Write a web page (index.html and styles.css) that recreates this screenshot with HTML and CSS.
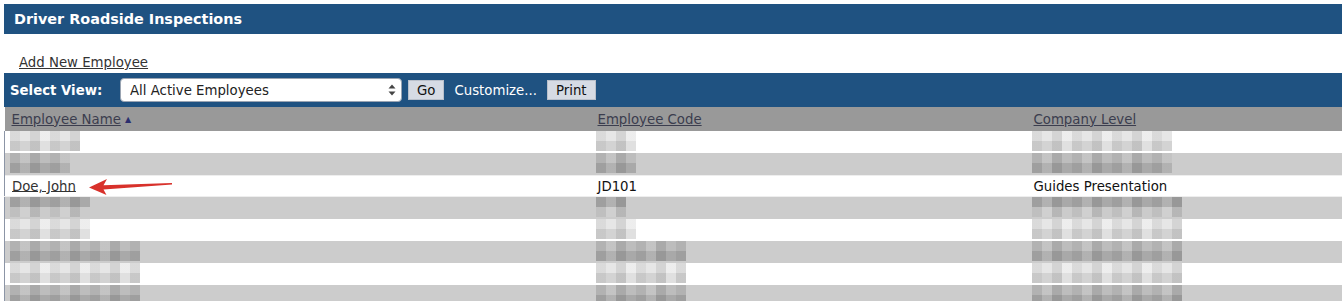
FILE: index.html
```html
<!DOCTYPE html>
<html>
  <head>
    <title>Driver Roadside Inspections</title>
    <link rel="stylesheet" href="styles.css">
  </head>
  <body>
    <div class="page_title">Driver Roadside Inspections</div>

    <div class="add_line">
      <a href="#" class="plain_link">Add New Employee</a>
    </div>

    <div class="view_bar">
      <span class="view_label">Select View:</span>
      <div class="select_box">
        <select class="view_select">
          <option>All Active Employees</option>
        </select>
        <svg class="select_arrows" width="8" height="12" viewBox="0 0 8 12">
          <path d="M4 0.5 L7.5 4.5 H0.5 Z M4 11.5 L7.5 7.5 H0.5 Z" fill="#444"/>
        </svg>
      </div>
      <button class="bar_button">Go</button>
      <span class="bar_text">Customize...</span>
      <button class="bar_button">Print</button>
    </div>

    <table class="emp_table">
      <thead>
        <tr>
          <th class="col_name"><a href="#" class="plain_link">Employee Name</a> <span class="sort_mark">&#9650;</span></th>
          <th class="col_code"><a href="#" class="plain_link">Employee Code</a></th>
          <th class="col_level"><a href="#" class="plain_link">Company Level</a></th>
        </tr>
      </thead>
      <tbody>
        <tr class="row_white">
          <td class="col_name"><span class="blur light w7"></span></td>
          <td class="col_code"><span class="blur light w4"></span></td>
          <td class="col_level"><span class="blur light w14"></span></td>
        </tr>
        <tr class="row_grey">
          <td class="col_name"><span class="blur dark w6"></span></td>
          <td class="col_code"><span class="blur dark w4"></span></td>
          <td class="col_level"><span class="blur dark w14"></span></td>
        </tr>
        <tr class="row_white row_picked">
          <td class="col_name">
            <a href="#" class="plain_link">Doe, John</a>
            <svg class="pointer" width="84" height="17" viewBox="0 0 84 17">
              <path d="M0 9.5 L18 1 L14.5 7.2 L83 5 L83 6.4 L14.5 11.6 L17.5 17 Z" fill="#d8312b"/>
            </svg>
          </td>
          <td class="col_code">JD101</td>
          <td class="col_level">Guides Presentation</td>
        </tr>
        <tr class="row_grey">
          <td class="col_name"><span class="blur darktop w8"></span></td>
          <td class="col_code"><span class="blur darktop w3"></span></td>
          <td class="col_level"><span class="blur darktop w15"></span></td>
        </tr>
        <tr class="row_white">
          <td class="col_name"><span class="blur light w8"></span></td>
          <td class="col_code"><span class="blur light w4"></span></td>
          <td class="col_level"><span class="blur light w15"></span></td>
        </tr>
        <tr class="row_grey">
          <td class="col_name"><span class="blur dark w13"></span></td>
          <td class="col_code"><span class="blur dark w9"></span></td>
          <td class="col_level"><span class="blur dark w15"></span></td>
        </tr>
        <tr class="row_white">
          <td class="col_name"><span class="blur light w13"></span></td>
          <td class="col_code"><span class="blur light w9"></span></td>
          <td class="col_level"><span class="blur light w15"></span></td>
        </tr>
        <tr class="row_grey">
          <td class="col_name"><span class="blur dark w13"></span></td>
          <td class="col_code"><span class="blur dark w9"></span></td>
          <td class="col_level"><span class="blur dark w15"></span></td>
        </tr>
      </tbody>
    </table>
  </body>
</html>
```

FILE: styles.css
```css
/* employee list page */
body {
  margin: 4px 0 0 4px;
  font-family: "DejaVu Sans", Verdana, sans-serif;
  font-size: 13.3px;
  color: #111;
  background: #fff;
}

.page_title {
  background-color: #1f5281;
  color: #fff;
  font-weight: bold;
  font-size: 14.4px;
  height: 30px;
  line-height: 31px;
  padding-left: 10px;
}

.add_line {
  padding: 21px 0 2px 15px;
  line-height: 16px;
}

.plain_link {
  color: #333;
  text-decoration: underline;
}

.view_bar {
  display: flex;
  align-items: center;
  background-color: #1f5281;
  height: 34px;
  padding-left: 6px;
  color: #fff;
}

.view_label {
  font-weight: bold;
  width: 110px;
}

.select_box {
  display: flex;
  align-items: center;
  width: 280px;
  height: 22px;
  background: #fff;
  border: 1px solid #9aa4b2;
  border-radius: 4px;
  margin-right: 6px;
}

.view_select {
  appearance: none;
  -webkit-appearance: none;
  border: 0;
  background: transparent;
  flex: 1;
  font-family: inherit;
  font-size: 13.3px;
  color: #222;
  padding-left: 9px;
  outline: none;
}

.select_arrows {
  margin-right: 5px;
}

.bar_button {
  font-family: inherit;
  font-size: 13.3px;
  color: #111;
  background-color: #d6dbe4;
  border: 1px solid #b9c0cb;
  height: 20px;
  padding: 0 8px;
  margin: 0;
}

.bar_text {
  margin: 0 10px 0 10px;
}

.emp_table {
  width: 1338px;
  border-collapse: collapse;
  table-layout: fixed;
}

.emp_table th {
  background-color: #999;
  text-align: left;
  font-weight: normal;
  height: 24px;
  padding: 0 0 0 7px;
}

.emp_table th .plain_link {
  color: #3b3d4e;
}

.sort_mark {
  font-size: 8px;
  color: #2b2e6e;
  vertical-align: 2px;
}

.emp_table td {
  height: 22px;
  padding: 0 0 0 7px;
  vertical-align: middle;
  white-space: nowrap;
}

.emp_table tbody tr td:first-child {
  border-left: 1px solid #8c95a6;
}

.col_name { width: 579px; }
.col_code { width: 429px; }
.col_level { width: 309px; }

.row_white { background: #fff; }
.row_grey { background: #ccc; }

.row_picked td {
  border-top: 1px solid #eee;
  border-bottom: 1px solid #eee;
  height: 20px;
}

.pointer {
  vertical-align: middle;
  margin-left: 9px;
}

/* pixelated placeholders for hidden rows */
.blur {
  display: block;
  height: 20px;
  margin: 0 0 2px -2px;
}
.blur.light {
  background-image:
    repeating-linear-gradient(90deg, rgba(0,0,0,.05) 0 10px, rgba(0,0,0,0) 10px 20px, rgba(0,0,0,.08) 20px 30px, rgba(255,255,255,.3) 30px 40px),
    linear-gradient(180deg, #e6e6e6 0 10px, #d3d3d3 10px 20px);
}
.blur.dark {
  background-image:
    repeating-linear-gradient(90deg, rgba(0,0,0,.06) 0 10px, rgba(255,255,255,.1) 10px 20px, rgba(0,0,0,.1) 20px 30px, rgba(0,0,0,0) 30px 40px),
    linear-gradient(180deg, #bdbdbd 0 10px, #a9a9a9 10px 20px);
}
.blur.darktop {
  background-image:
    repeating-linear-gradient(90deg, rgba(0,0,0,.06) 0 10px, rgba(255,255,255,.1) 10px 20px, rgba(0,0,0,.1) 20px 30px, rgba(0,0,0,0) 30px 40px),
    linear-gradient(180deg, #a9a9a9 0 10px, #cbcbcb 10px 20px);
}

.w3 { width: 30px; }
.w4 { width: 40px; }
.w6 { width: 60px; }
.w7 { width: 70px; }
.w8 { width: 80px; }
.w9 { width: 90px; }
.w13 { width: 130px; }
.w14 { width: 140px; }
.w15 { width: 150px; }
```
